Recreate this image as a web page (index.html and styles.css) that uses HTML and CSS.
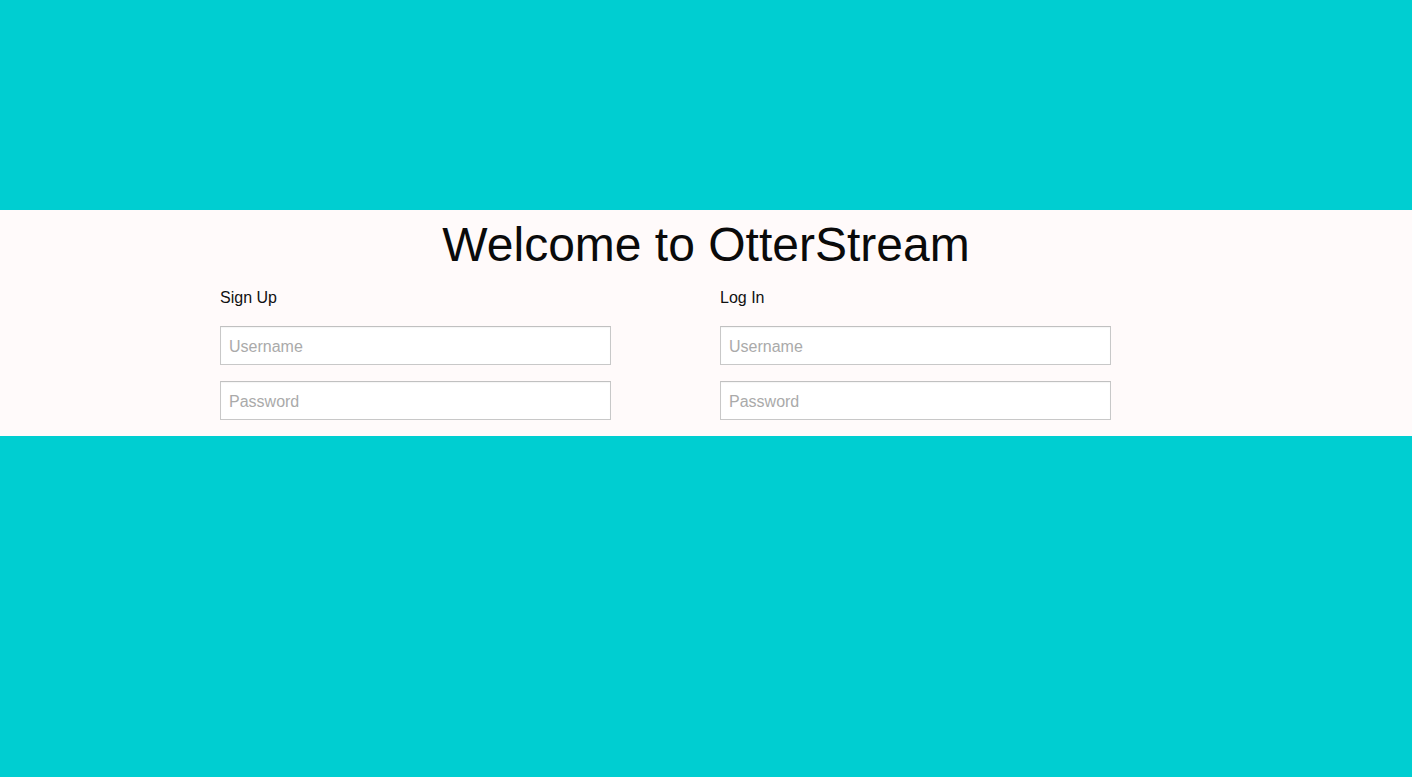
FILE: index.html
```html
<!DOCTYPE html>
<html lang="en">
<head>
<meta charset="utf-8">
<title>OtterStream</title>
<link rel="stylesheet" href="styles.css">
</head>
<body>
<div class="page">
  <div class="panel">
    <h1 class="title">Welcome to OtterStream</h1>
    <div class="forms">
      <form class="form">
        <div class="form-label">Sign Up</div>
        <input class="field" type="text" placeholder="Username">
        <input class="field" type="password" placeholder="Password">
      </form>
      <form class="form">
        <div class="form-label">Log In</div>
        <input class="field" type="text" placeholder="Username">
        <input class="field" type="password" placeholder="Password">
      </form>
    </div>
  </div>
</div>
</body>
</html>
```

FILE: styles.css
```css
html, body {
  margin: 0;
  padding: 0;
  height: 100%;
}
body {
  background: #00ced1;
  font-family: "Liberation Sans", Arial, Helvetica, sans-serif;
  color: #000;
}
.page {
  height: 100%;
  display: flex;
  flex-direction: column;
  padding-top: 210px;
  box-sizing: border-box;
}
.panel {
  background: #fffafa;
  padding: 7px 0 16px;
}
.title {
  margin: 0 0 16px;
  font-size: 48px;
  line-height: 56px;
  font-weight: normal;
  text-align: center;
  color: #0a0a0a;
}
.forms {
  display: flex;
  gap: 109px;
  padding-left: 220px;
}
.form {
  width: 391px;
  display: flex;
  flex-direction: column;
  gap: 16px;
  margin: 0;
}
.form-label {
  font-size: 16px;
  line-height: 18px;
  margin-bottom: 3px;
  color: #111;
}
.field {
  box-sizing: border-box;
  width: 391px;
  height: 39px;
  margin: 0;
  padding: 2px 8px 0;
  border: 1px solid #c8c8c8;
  border-top-color: #c0c0c0;
  box-shadow: inset 0 1px 1px rgba(0,0,0,0.04);
  background: #fff;
  font-family: "Liberation Sans", Arial, Helvetica, sans-serif;
  font-size: 16px;
  color: #333;
  outline: none;
  border-radius: 0;
}
.field::placeholder {
  color: #aaaaaa;
}
```
